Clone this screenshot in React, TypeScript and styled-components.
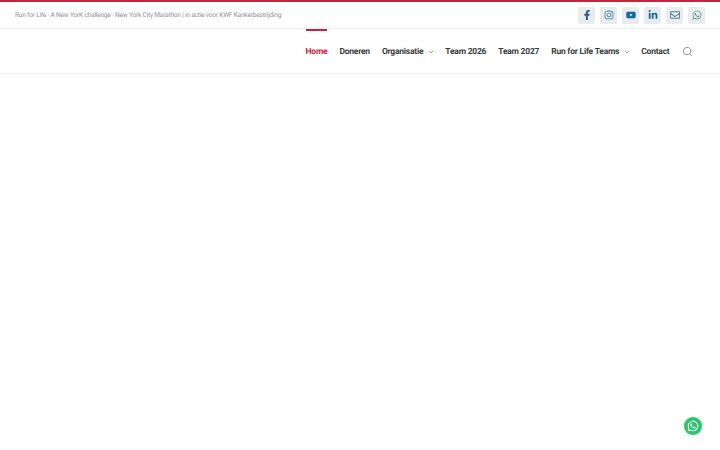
import styled, {createGlobalStyle} from 'styled-components';
import {FaFacebookF, FaInstagram, FaYoutube, FaLinkedinIn, FaRegEnvelope, FaWhatsapp} from 'react-icons/fa';
import {LuChevronDown, LuSearch} from 'react-icons/lu';

const GlobalStyle = createGlobalStyle`
  html, body {
    margin: 0;
    background: #fff;
    font-family: "Roboto", "Liberation Sans", sans-serif;
    text-rendering: geometricPrecision;
  }
`;

const Page = styled.div`
  width: 720px;
  height: 450px;
  position: relative;
  overflow: hidden;
  background: #fff;
`;

const TopBar = styled.div`
  height: 26px;
  border-top: 2px solid #c5243c;
  border-bottom: 1px solid #eeeeee;
  padding: 0 15px;
  display: flex;
  align-items: center;
  justify-content: space-between;
`;

const Tagline = styled.span`
  font-size: 6.6px;
  letter-spacing: -0.22px;
  color: #8f9295;
  white-space: nowrap;
`;

const Socials = styled.div`
  display: flex;
  gap: 5px;
`;

const Social = styled.a<{ $color: string }>`
  width: 17px;
  height: 17px;
  border-radius: 2px;
  background: #e9ebec;
  color: ${props => props.$color};
  font-size: 10px;
  display: flex;
  align-items: center;
  justify-content: center;
`;

const Header = styled.header`
  height: 44px;
  border-bottom: 1px solid #eeeeee;
  padding-right: 27px;
  display: flex;
  justify-content: flex-end;
  align-items: stretch;
`;

const Nav = styled.nav`
  display: flex;
  align-items: stretch;
  gap: 12px;
`;

const NavItem = styled.a<{ $active?: boolean }>`
  display: flex;
  align-items: center;
  gap: 4px;
  border-top: 2px solid ${props => props.$active ? '#c5243c' : 'transparent'};
  font-size: 8.5px;
  font-weight: 700;
  letter-spacing: -0.23px;
  color: ${props => props.$active ? '#c5243c' : '#3a3d40'};
  white-space: nowrap;

  svg {
    margin-right: -2px;
    color: #6c7074;
    font-size: 8px;
  }
`;

const SearchButton = styled.span`
  display: flex;
  align-items: center;
  margin-left: 0.5px;
  padding-top: 1px;
  color: #85898d;
  font-size: 11px;
`;

const Chat = styled.a`
  position: absolute;
  left: 684px;
  top: 417px;
  width: 18px;
  height: 18px;
  border-radius: 50%;
  background: #2ec46d;
  box-shadow: 0 0 3px rgba(46, 196, 109, 0.35);
  color: #fff;
  font-size: 12px;
  display: flex;
  align-items: center;
  justify-content: center;
`;

const socials = [
  {icon: <FaFacebookF />, color: '#2d5b94'},
  {icon: <FaInstagram />, color: '#2f7f9f'},
  {icon: <FaYoutube />, color: '#0f6aa0'},
  {icon: <FaLinkedinIn />, color: '#0f6aa0'},
  {icon: <FaRegEnvelope />, color: '#4f8192'},
  {icon: <FaWhatsapp />, color: '#4f8f92'},
];

export default function App() {
  return (
    <Page>
      <GlobalStyle />
      <TopBar>
        <Tagline>Run for Life - A New YorK challenge - New York City Marathon | in actie voor KWF Kankerbestrijding</Tagline>
        <Socials>
          {socials.map((s, i) => <Social key={i} $color={s.color}>{s.icon}</Social>)}
        </Socials>
      </TopBar>
      <Header>
        <Nav>
          <NavItem $active>Home</NavItem>
          <NavItem>Doneren</NavItem>
          <NavItem>Organisatie <LuChevronDown /></NavItem>
          <NavItem>Team 2026</NavItem>
          <NavItem>Team 2027</NavItem>
          <NavItem>Run for Life Teams <LuChevronDown /></NavItem>
          <NavItem>Contact</NavItem>
          <SearchButton><LuSearch /></SearchButton>
        </Nav>
      </Header>
      <Chat><FaWhatsapp /></Chat>
    </Page>
  );
}
